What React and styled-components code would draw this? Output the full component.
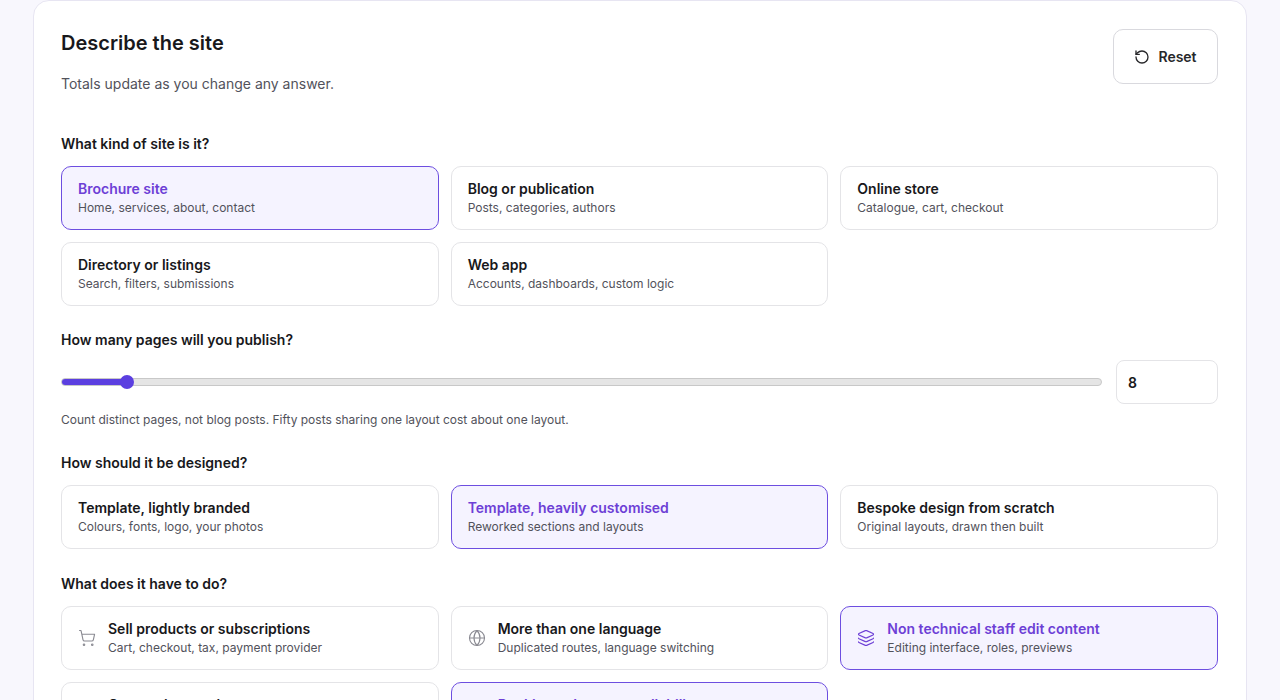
import React from "react";
import styled, { createGlobalStyle } from "styled-components";
import { ShoppingCart, Globe, Layers, RotateCcw, Plug, Calendar } from "lucide-react";

const G = createGlobalStyle`
  body { margin:0; background:#f8f7fd; font-family: Inter, "Noto Sans", sans-serif; color:#18181b; }
`;
const Page = styled.div`padding:0 33px;`;
const Panel = styled.div`
  background:#fff; border:1px solid #e7e5f2; border-radius:16px;
  padding:30px 28px 40px 27px;
`;
const Head = styled.div`display:flex; justify-content:space-between; align-items:flex-start;`;
const Title = styled.h1`margin:0; font-size:20px; font-weight:600; line-height:24px;`;
const Sub = styled.p`margin:20px 0 0; font-size:14px; color:#52525b;`;
const ResetBtn = styled.button`
  display:flex; align-items:center; gap:8px; height:55px; width:105px; justify-content:center; margin-top:-2px;
  border:1px solid #d9d9de; border-radius:10px; background:#fff; font:600 14px Inter, sans-serif; color:#27272a;
`;
const Q = styled.h2`margin:${p=>p.$mt||0}px 0 ${p=>p.$mb??12}px; font-size:14px; font-weight:600; line-height:20px;`;
const Grid = styled.div`display:grid; grid-template-columns:repeat(3,1fr); gap:12px;`;
const Card = styled.div`
  height:64px; box-sizing:border-box; border-radius:10px; padding:0 16px; display:flex; align-items:center; gap:12px;
  border:1px solid ${p=>p.$on?"#6d4ee0":"#e4e4e7"}; background:${p=>p.$on?"#f5f3ff":"#fff"};
`;
const CT = styled.div`font-size:14px; font-weight:600; color:${p=>p.$on?"#6d3fd6":"#18181b"}; line-height:20px;`;
const CD = styled.div`font-size:12px; color:#52525b; line-height:18px;`;
const Row = styled.div`display:flex; align-items:center; gap:14px;`;
const Track = styled.div`flex:1; height:6px; background:#e5e5e5; border:1px solid #c8c8c8; border-radius:4px; position:relative;`;
const Fill = styled.div`height:100%; background:#5b3fe0; border-radius:4px;`;
const Thumb = styled.div`position:absolute; top:50%; width:14px; height:14px; border-radius:50%; background:#5b3fe0; transform:translate(-50%,-50%);`;
const Num = styled.div`width:102px; height:44px; box-sizing:border-box; border:1px solid #e4e4e7; border-radius:8px; padding:0 11px; display:flex; align-items:center; font-size:14px; font-weight:600;`;
const Hint = styled.p`margin:8px 0 0; font-size:12px; color:#52525b;`;

const C = ({on, t, d, icon:I}) => (
  <Card $on={on}>
    {I && <I size={18} strokeWidth={1.5} color={on?"#6d3fd6":"#8a8a92"} />}
    <div><CT $on={on}>{t}</CT><CD>{d}</CD></div>
  </Card>
);

export default function App(){
  const pct = 6.3;
  return <Page><G/><Panel>
    <Head>
      <div><Title>Describe the site</Title><Sub>Totals update as you change any answer.</Sub></div>
      <ResetBtn><RotateCcw size={16} strokeWidth={2}/>Reset</ResetBtn>
    </Head>
    <Q $mt={42}>What kind of site is it?</Q>
    <Grid>
      <C on t="Brochure site" d="Home, services, about, contact"/>
      <C t="Blog or publication" d="Posts, categories, authors"/>
      <C t="Online store" d="Catalogue, cart, checkout"/>
      <C t="Directory or listings" d="Search, filters, submissions"/>
      <C t="Web app" d="Accounts, dashboards, custom logic"/>
    </Grid>
    <Q $mt={24} $mb={10}>How many pages will you publish?</Q>
    <Row>
      <Track><Fill style={{width:pct+"%"}}/><Thumb style={{left:pct+"%"}}/></Track>
      <Num>8</Num>
    </Row>
    <Hint>Count distinct pages, not blog posts. Fifty posts sharing one layout cost about one layout.</Hint>
    <Q $mt={26}>How should it be designed?</Q>
    <Grid>
      <C t="Template, lightly branded" d="Colours, fonts, logo, your photos"/>
      <C on t="Template, heavily customised" d="Reworked sections and layouts"/>
      <C t="Bespoke design from scratch" d="Original layouts, drawn then built"/>
    </Grid>
    <Q $mt={25}>What does it have to do?</Q>
    <Grid>
      <C icon={ShoppingCart} t="Sell products or subscriptions" d="Cart, checkout, tax, payment provider"/>
      <C icon={Globe} t="More than one language" d="Duplicated routes, language switching"/>
      <C on icon={Layers} t="Non technical staff edit content" d="Editing interface, roles, previews"/>
      <C icon={Plug} t="Custom integrations" d="CRM, APIs, third party services"/>
      <C on icon={Calendar} t="Bookings, dates or availability" d="Calendars, slots, reminders"/>
    </Grid>
  </Panel></Page>;
}
